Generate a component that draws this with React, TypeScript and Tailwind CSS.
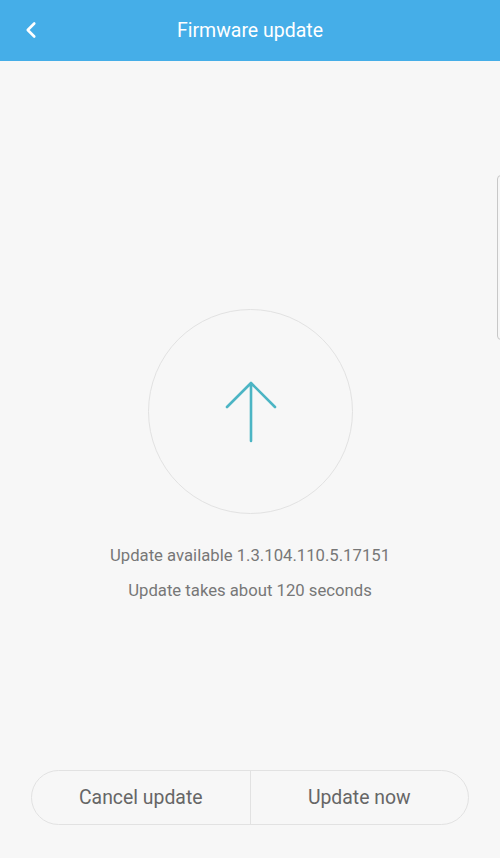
import { ChevronLeft } from "lucide-react";

export default function App() {
  return (
    <div
      className="relative flex h-[858px] w-[500px] flex-col overflow-hidden bg-[#f7f7f7]"
      style={{ fontFamily: "Roboto, 'Noto Sans', sans-serif" }}
    >
      <header className="relative flex h-[61px] shrink-0 items-center justify-center bg-[#45aee8]">
        <button type="button" className="absolute left-[18px] top-[17px] text-white">
          <ChevronLeft size={26} strokeWidth={2.4} />
        </button>
        <h1 className="text-[19.5px] text-white">Firmware update</h1>
      </header>

      <main className="flex flex-1 flex-col items-center">
        <div className="mt-[248px] flex h-[205px] w-[205px] items-center justify-center rounded-full border border-[#e2e2e2]">
          <svg width="60" height="66" viewBox="0 0 60 66" fill="none" className="ml-[2px]">
            <path
              d="M30 4 V62 M6 28 L30 4 L54 28"
              stroke="#4cb5c4"
              strokeWidth="2.6"
              strokeLinecap="round"
              strokeLinejoin="round"
            />
          </svg>
        </div>
        <p className="mt-[32px] text-[16.7px] leading-[20px] text-[#777]">
          Update available 1.3.104.110.5.17151
        </p>
        <p className="mt-[15px] text-[16.7px] leading-[20px] text-[#777]">
          Update takes about 120 seconds
        </p>

        <div className="mt-auto mb-[33px] flex h-[55px] w-[438px] rounded-full border border-[#e2e2e2]">
          <button type="button" className="flex-1 text-[19.4px] text-[#666]">
            Cancel update
          </button>
          <div className="w-px bg-[#e2e2e2]" />
          <button type="button" className="flex-1 text-[19.4px] text-[#666]">
            Update now
          </button>
        </div>
      </main>

      <div className="absolute right-[-6px] top-[175px] h-[165px] w-[9px] rounded-[4px] border border-[#c8c8c8]" />
    </div>
  );
}
